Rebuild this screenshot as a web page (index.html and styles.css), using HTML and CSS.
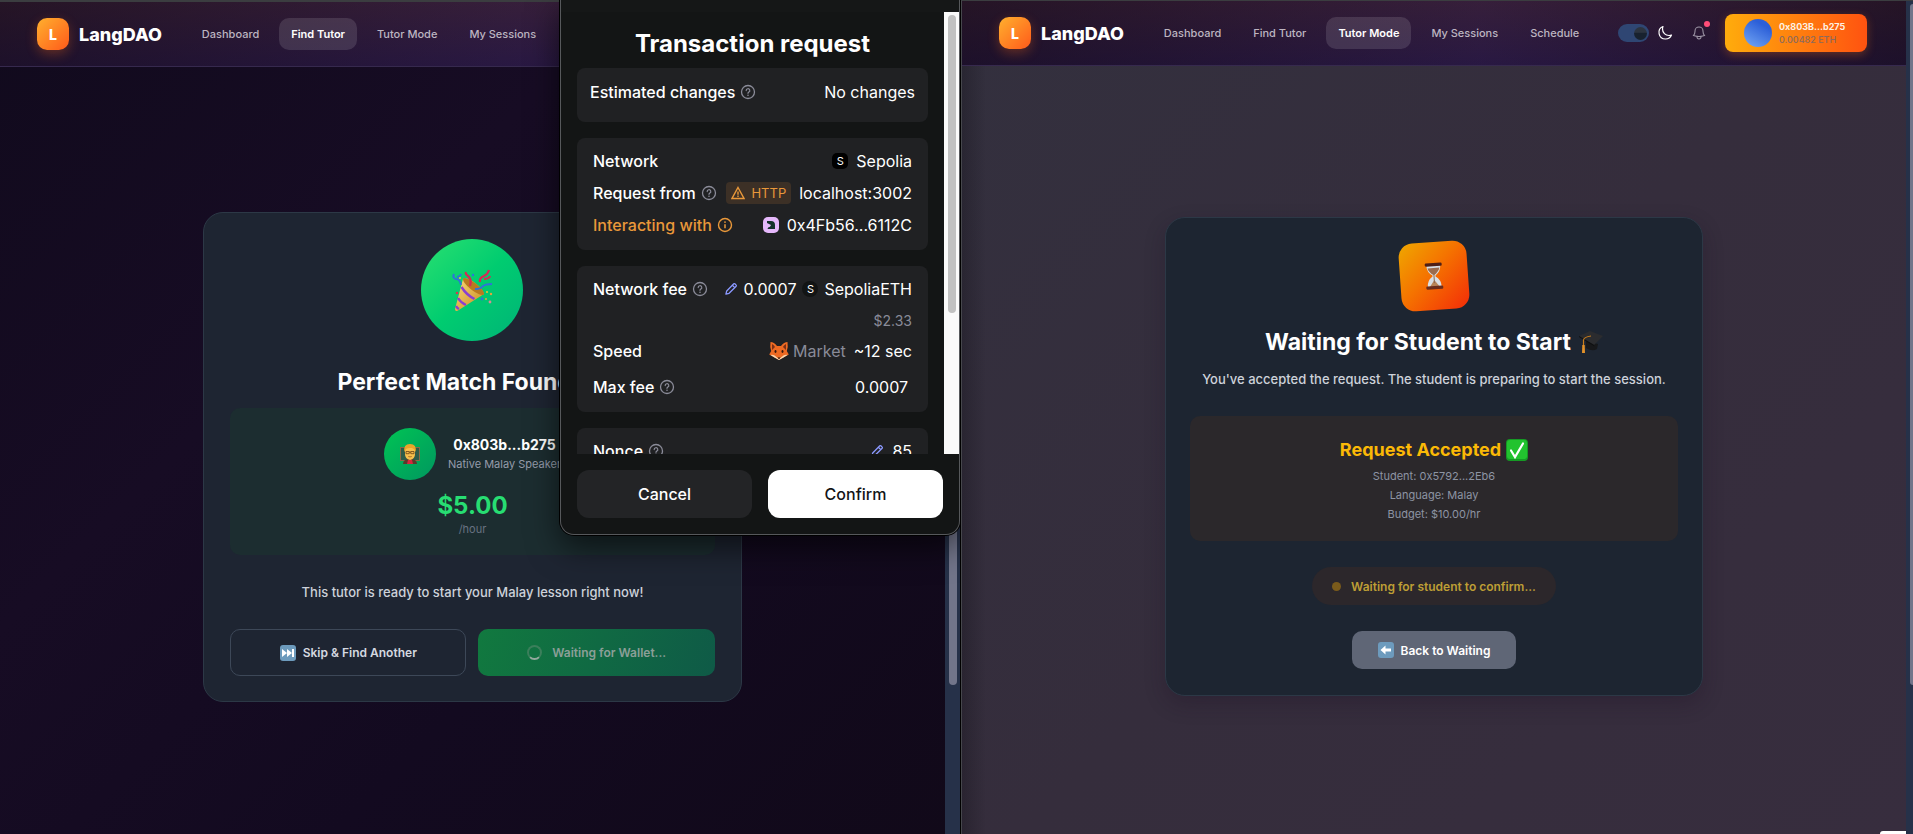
FILE: index.html
```html
<!DOCTYPE html>
<html lang="en">
<head>
    <meta charset="UTF-8">
    <meta name="viewport" content="width=device-width, initial-scale=1.0">
    <title>LangDAO</title>
    <link rel="stylesheet" href="styles.css">
</head>
<body>
    <!-- shared icons -->
    <svg class="defs" width="0" height="0" aria-hidden="true">
        <defs>
            <linearGradient id="cone" x1="0" y1="0" x2="1" y2="1">
                <stop offset="0" stop-color="#f9d978"/>
                <stop offset="1" stop-color="#c98a1e"/>
            </linearGradient>
        </defs>
        <symbol id="help" viewBox="0 0 16 16">
            <circle cx="8" cy="8" r="6.500" fill="none" stroke="currentColor" stroke-width="1.3"/>
            <path d="M6.200 6.600a1.800 1.800 0 1 1 2.700 1.500c-.6.4-.9.6-.9 1.200" fill="none" stroke="currentColor" stroke-width="1.2" stroke-linecap="round"/>
            <circle cx="8" cy="11.2" r=".8" fill="currentColor"/>
        </symbol>
        <symbol id="info" viewBox="0 0 16 16">
            <circle cx="8" cy="8" r="6.500" fill="none" stroke="currentColor" stroke-width="1.4"/>
            <path d="M8 7.200v4" stroke="currentColor" stroke-width="1.5"/>
            <circle cx="8" cy="5.1" r=".9" fill="currentColor"/>
        </symbol>
        <symbol id="pencil" viewBox="0 0 16 16">
            <path d="M2.200 13.800l.9-3.600 8.100-8.100q.6-.5 1.200 0l1.500 1.500q.5.6 0 1.200l-8.100 8.100zM9.600 3.800l2.600 2.600" fill="none" stroke="currentColor" stroke-width="1.5" stroke-linejoin="round"/>
        </symbol>
        <symbol id="popper" viewBox="0 0 42 42">
            <path d="M4 40q0 3 3 1.400L33 25Q32 20 24 14 17 8 12 10z" fill="url(#cone)"/>
            <ellipse cx="22.500" cy="17.500" rx="13" ry="3.800" transform="rotate(38 22.500 17.500)" fill="#b97920"/>
            <path d="M10.500 18q5 8 13 12M7 29q3 5 8 7M5 37q1 2 3 3" fill="none" stroke="#8a3fd1" stroke-width="2.400"/>
            <path d="M19 17q2-7-2-10-3-2-2-4M29 13q-1-4 4-6 4-2 5-6M33 10q5 0 6-3" fill="none" stroke="#d42a55" stroke-width="2.200"/>
            <path d="M24 20q6 0 8-3 3-2 9-2M10 16q-1-6-5-6-4-1-2-5M6 8q3 0 4-3" fill="none" stroke="#2f73d8" stroke-width="2"/>
            <circle cx="22" cy="6" r="1.200" fill="#2f73d8"/>
            <circle cx="9" cy="9" r="1.100" fill="#e6c23a"/>
            <circle cx="6" cy="24" r="1.300" fill="#d33a50"/>
            <circle cx="31" cy="30" r="1.400" fill="#2f73d8"/>
            <circle cx="40" cy="25" r="1.200" fill="#e2a43c"/>
            <circle cx="36" cy="23" r="1.100" fill="#dfc43a"/>
            <circle cx="39" cy="33" r="1.400" fill="#d88b95"/>
            <circle cx="35" cy="30" r="1" fill="#e2a43c"/>
        </symbol>
    </svg>

    <div class="desktop">
        <section class="window window-student">
            <header class="navbar">
                <a class="brand" href="#"><span class="brand-mark">L</span>LangDAO</a>
                <nav class="nav-links">
                    <a href="#">Dashboard</a>
                    <a href="#" class="active">Find Tutor</a>
                    <a href="#">Tutor Mode</a>
                    <a href="#">My Sessions</a>
                </nav>
            </header>
            <main class="stage">
                <div class="card match-card">
                    <div class="party">
                        <svg width="42" height="42" role="img" aria-label="Party popper"><use href="#popper"/></svg>
                    </div>
                    <h1>Perfect Match Found! <svg width="20" height="20" aria-hidden="true"><use href="#popper"/></svg></h1>
                    <div class="match-box">
                        <div class="tutor">
                            <div class="avatar">
                                <svg width="20" height="22" viewBox="0 0 20 22" role="img" aria-label="Teacher">
                                    <path d="M0 4h20v14H0z" fill="#8a6a45"/>
                                    <path d="M1 5h18v12H1z" fill="#2d5c4a"/>
                                    <path d="M3 21q0-5 7-5t7 5z" fill="#5b3a2c"/>
                                    <path d="M8 17h4l1 4H7z" fill="#d8283c"/>
                                    <path d="M5 6q0-4 5-4t5 4v5q0 5-5 6-5-1-5-6z" fill="#f7c04c"/>
                                    <path d="M4.500 9Q3 1 10 1t5.500 8Q15 6 12 5 8 4.500 6 6z" fill="#e9a52a"/>
                                    <path d="M6 8.500h3.200v2.200H6zm4.800 0H14v2.200h-3.200zM9.200 9.200h1.600" fill="none" stroke="#6b4418" stroke-width=".8"/>
                                    <path d="M8.300 13.500q1.700.8 3.400 0" fill="none" stroke="#9a5a20" stroke-width=".8"/>
                                </svg>
                            </div>
                            <div class="tutor-info">
                                <strong>0x803b...b275</strong>
                                <span>Native Malay Speaker</span>
                            </div>
                        </div>
                        <div class="price">$5.00</div>
                        <div class="per">/hour</div>
                    </div>
                    <p class="ready">This tutor is ready to start your Malay lesson right now!</p>
                    <div class="match-actions">
                        <button class="btn btn-outline" type="button">
                            <svg width="16" height="16" viewBox="0 0 16 16" aria-hidden="true">
                                <rect width="16" height="16" rx="3" fill="#6d9bbd"/>
                                <path d="M2 4l5 4-5 4zM7 4l5 4-5 4zM12 4h2v8h-2z" fill="#fff"/>
                            </svg>
                            Skip &amp; Find Another
                        </button>
                        <button class="btn btn-wallet" type="button" disabled>
                            <span class="spinner"></span>
                            Waiting for Wallet...
                        </button>
                    </div>
                </div>
            </main>
            <div class="page-scroll"><div class="page-thumb"></div></div>

            <aside class="wallet" aria-label="Wallet">
                <div class="wallet-top"></div>
                <div class="wallet-view">
                    <div class="wallet-body">
                        <h2>Transaction request</h2>
                        <div class="panel panel-changes">
                            <div class="row">
                                <span class="label">Estimated changes <svg class="hint"><use href="#help"/></svg></span>
                                <span class="value">No changes</span>
                            </div>
                        </div>
                        <div class="panel">
                            <div class="row">
                                <span class="label">Network</span>
                                <span class="value"><i class="token">S</i>Sepolia</span>
                            </div>
                            <div class="row">
                                <span class="label">Request from <svg class="hint"><use href="#help"/></svg></span>
                                <span class="value">
                                    <span class="http">
                                        <svg width="14" height="14" viewBox="0 0 14 14" aria-hidden="true">
                                            <path d="M7 1.500L13 12.500H1z" fill="none" stroke="currentColor" stroke-width="1.400"/>
                                            <path d="M7 5.500v3.200M7 9.600v1.400" stroke="currentColor" stroke-width="1.400"/>
                                        </svg>
                                        HTTP
                                    </span>
                                    localhost:3002
                                </span>
                            </div>
                            <div class="row">
                                <span class="label warn">Interacting with <svg class="hint"><use href="#info"/></svg></span>
                                <span class="value">
                                    <svg width="16" height="16" viewBox="0 0 16 16" aria-hidden="true">
                                        <rect width="16" height="16" rx="5" fill="#e5b8fb"/>
                                        <path d="M4 4h4q4 0 4 4v4H4.500q0-2 2.500-2.300L8 8 4 6z" fill="#14312b"/>
                                    </svg>
                                    0x4Fb56...6112C
                                </span>
                            </div>
                        </div>
                        <div class="panel panel-fee">
                            <div class="row">
                                <span class="label">Network fee <svg class="hint"><use href="#help"/></svg></span>
                                <span class="value fee"><svg class="edit"><use href="#pencil"/></svg>0.0007 <i class="token round">S</i>SepoliaETH</span>
                            </div>
                            <div class="row fiat"><span class="value">$2.33</span></div>
                            <div class="row">
                                <span class="label">Speed</span>
                                <span class="value">
                                    <span class="market">
                                        <svg width="20" height="20" viewBox="0 0 20 20" role="img" aria-label="Fox">
                                            <path d="M1.500 1Q5 1 8 5h4q3-4 6.500-4 .8 5-.7 9l2 3.500-5.300 3L10 19l-4.500-2.500-5.300-3 2-3.500Q.7 6 1.500 1z" fill="#ee6a22"/>
                                            <path d="M3 3q2 1 3 3l-3 3zM17 3q-2 1-3 3l3 3z" fill="#7b2f16"/>
                                            <path d="M1.500 14q3.500-.6 5.300 1.600L10 18l3.200-2.400q1.800-2.200 5.300-1.600l-4 2.500L10 19l-4.500-2.500z" fill="#f6d9b3"/>
                                            <ellipse cx="6.500" cy="10.500" rx="1" ry="1.400" fill="#35180e"/>
                                            <ellipse cx="13.500" cy="10.500" rx="1" ry="1.400" fill="#35180e"/>
                                            <path d="M8.500 16.500h3L10 18.200z" fill="#1d1210"/>
                                        </svg>
                                        Market
                                    </span>
                                    ~12 sec
                                </span>
                            </div>
                            <div class="row max">
                                <span class="label">Max fee <svg class="hint"><use href="#help"/></svg></span>
                                <span class="value">0.0007</span>
                            </div>
                        </div>
                        <div class="panel">
                            <div class="row">
                                <span class="label">Nonce <svg class="hint"><use href="#help"/></svg></span>
                                <span class="value"><svg class="edit"><use href="#pencil"/></svg>85</span>
                            </div>
                        </div>
                    </div>
                    <div class="wallet-scroll"><div class="wallet-thumb"></div></div>
                </div>
                <footer class="wallet-actions">
                    <button class="cancel" type="button">Cancel</button>
                    <button class="confirm" type="button">Confirm</button>
                </footer>
            </aside>
        </section>

        <section class="window window-tutor">
            <header class="navbar">
                <a class="brand" href="#"><span class="brand-mark">L</span>LangDAO</a>
                <nav class="nav-links">
                    <a href="#">Dashboard</a>
                    <a href="#">Find Tutor</a>
                    <a href="#" class="active">Tutor Mode</a>
                    <a href="#">My Sessions</a>
                    <a href="#">Schedule</a>
                </nav>
                <div class="nav-tools">
                    <label class="theme">
                        <input type="checkbox" class="toggle" aria-label="Dark theme" checked>
                        <svg width="16" height="16" viewBox="0 0 24 24" aria-hidden="true">
                            <path d="M21.750 15A9.750 9.750 0 0 1 18 15.750 9.750 9.750 0 0 1 8.250 6c0-1.330.27-2.600.75-3.750A9.750 9.750 0 0 0 12.750 21a9.750 9.750 0 0 0 9-6z" fill="none" stroke="#fff" stroke-width="1.800" stroke-linejoin="round"/>
                        </svg>
                    </label>
                    <button class="bell" type="button" aria-label="Notifications">
                        <svg width="16" height="16" viewBox="0 0 24 24" aria-hidden="true">
                            <path d="M14.860 17.080a23.850 23.850 0 0 0 5.450-1.310A8.970 8.970 0 0 1 18 9.750V9A6 6 0 0 0 6 9v.75a8.970 8.970 0 0 1-2.310 6.020c1.730.64 3.560 1.090 5.450 1.310m5.720 0a24.250 24.250 0 0 1-5.720 0m5.720 0a3 3 0 1 1-5.720 0" fill="none" stroke="currentColor" stroke-width="1.600"/>
                        </svg>
                        <span class="bell-dot"></span>
                    </button>
                    <button class="account" type="button">
                        <span class="account-pic"></span>
                        <span class="account-text"><b>0x803B...b275</b><small>0.00482 ETH</small></span>
                    </button>
                </div>
            </header>
            <main class="stage">
                <div class="card wait-card">
                    <div class="hourglass">
                        <svg width="20" height="28" viewBox="0 0 20 28" role="img" aria-label="Hourglass">
                            <path d="M3 3h14q0 7-5.500 10.500v1Q17 18 17 25H3q0-7 5.500-10.500v-1Q3 10 3 3z" fill="#d9dfe4"/>
                            <path d="M4 6h12q-1 4-5.500 7h-1Q5 10 4 6z" fill="#9c6b4c"/>
                            <path d="M10 18l5 7H5z" fill="#b98558"/>
                            <path d="M9.500 13h1v8h-1z" fill="#8d6a50"/>
                            <rect x="1.500" y="1" width="17" height="3.200" rx="1.200" fill="#4e1f16"/>
                            <rect x="1.500" y="24" width="17" height="3.200" rx="1.200" fill="#6b2d1c"/>
                        </svg>
                    </div>
                    <h1>
                        Waiting for Student to Start
                        <svg width="24" height="24" viewBox="0 0 24 24" role="img" aria-label="Graduation cap">
                            <path d="M7 11l12 3-1 5q-5 3-11-1z" fill="#17181a"/>
                            <path d="M0 6l11-5 13 5-9 9z" fill="#2b2c2f"/>
                            <path d="M0 6l15 9 .3 1.200L0 7z" fill="#0e0f10"/>
                            <path d="M12 6Q5 7 4.500 10v7" fill="none" stroke="#c97d1c" stroke-width="1.200"/>
                            <path d="M3.300 15h2.400l.3 8H3z" fill="#e2912a"/>
                        </svg>
                    </h1>
                    <p class="lead">You've accepted the request. The student is preparing to start the session.</p>
                    <div class="request-box">
                        <h3>
                            Request Accepted
                            <svg width="22" height="22" viewBox="0 0 22 22" role="img" aria-label="Accepted">
                                <rect width="22" height="22" rx="4" fill="#159a24"/>
                                <rect x="1" y="1" width="20" height="19" rx="3" fill="#22c32f"/>
                                <path d="M5 11.500l4 6.500 8-13.500" fill="none" stroke="#fff" stroke-width="2.200" stroke-linecap="round"/>
                            </svg>
                        </h3>
                        <p>Student: 0x5792...2Eb6</p>
                        <p>Language: Malay</p>
                        <p>Budget: $10.00/hr</p>
                    </div>
                    <div class="status"><span class="status-dot"></span>Waiting for student to confirm...</div>
                    <button class="btn btn-back" type="button">
                        <svg width="16" height="16" viewBox="0 0 16 16" aria-hidden="true">
                            <rect width="16" height="16" rx="3" fill="#6d9bbd"/>
                            <path d="M2.500 8l5-4.500V6.500H13v3H7.500v3z" fill="#fff"/>
                        </svg>
                        Back to Waiting
                    </button>
                </div>
            </main>
            <div class="page-scroll"><div class="page-thumb"></div></div>
            <div class="corner-widget"></div>
        </section>
    </div>
</body>
</html>
```
FILE: styles.css
```css
* {
    box-sizing: border-box;
}
body {
    margin: 0;
    background: #000;
    font-family: Inter, "Liberation Sans", sans-serif;
    color: #fff;
}
button {
    font-family: inherit;
    border: none;
    cursor: pointer;
}
a {
    color: inherit;
    text-decoration: none;
}
h1, h2, h3, p {
    margin: 0;
}
svg {
    flex: none;
}
.defs {
    position: absolute;
}
.desktop {
    display: grid;
    grid-template-columns: 961fr 952fr;
    height: 100vh;
    overflow: hidden;
}

/* browser windows */
.window {
    position: relative;
    display: grid;
    grid-template-columns: 1fr 15px;
    grid-template-rows: auto 1fr;
    min-height: 0;
    border-top: 2px solid #3b3d40;
}
.window-student {
    border-right: 1px solid #000;
    background: linear-gradient(135deg, #110a1d 0%, #170c24 35%, #130a20 65%, #110919 100%);
}
.window-tutor {
    grid-template-columns: 1fr 7px;
    border-top-width: 1px;
    border-left: 1px solid #46474c;
    background:
        linear-gradient(90deg, rgba(20, 18, 26, 0.35), rgba(20, 18, 26, 0) 24px),
        linear-gradient(135deg, #33303e, #352d3c 50%, #372d3e);
}
.navbar {
    grid-column: 1;
    display: flex;
    align-items: center;
    height: 65px;
    padding: 0 37px;
    border-bottom: 1px solid #36294e;
    background:
        linear-gradient(90deg, rgba(22, 10, 22, 0.5), rgba(60, 30, 80, 0.2) 55%, rgba(22, 10, 22, 0.5)),
        linear-gradient(180deg, #351f35, #24173f);
}
.window-tutor .navbar {
    padding-right: 39px;
}
.brand {
    display: flex;
    align-items: center;
    gap: 10px;
    font-size: 18px;
    font-weight: 800;
}
.brand-mark {
    display: grid;
    place-items: center;
    width: 32px;
    height: 32px;
    border-radius: 10px;
    background: linear-gradient(135deg, #ffb02e, #ff5a1a);
    box-shadow: 0 4px 12px rgba(255, 110, 20, 0.3);
    font-size: 14px;
}
.nav-links {
    display: flex;
    gap: 8px;
    margin-left: 28px;
    font-size: 11px;
    font-weight: 500;
    color: #bdb5c1;
}
.nav-links a {
    padding: 0 12px;
    border-radius: 10px;
    line-height: 32px;
    white-space: nowrap;
}
.nav-links .active {
    background: rgba(255, 255, 255, 0.12);
    color: #fff;
    font-weight: 600;
}
.nav-tools {
    display: flex;
    align-items: center;
    gap: 18px;
    margin-left: auto;
}
.theme {
    display: flex;
    align-items: center;
    gap: 8px;
}
.toggle {
    appearance: none;
    display: flex;
    justify-content: flex-end;
    align-items: center;
    width: 31px;
    height: 18px;
    margin: 0;
    padding: 2px;
    border-radius: 9px;
    background: #2f4673;
}
.toggle::before {
    content: "";
    width: 13px;
    height: 13px;
    border-radius: 50%;
    background: linear-gradient(#2c3440 40%, #18222f 50%);
}
.bell {
    position: relative;
    display: flex;
    padding: 0;
    background: none;
    color: #9e96a6;
}
.bell-dot {
    position: absolute;
    top: -4px;
    right: -3px;
    width: 6px;
    height: 6px;
    border-radius: 50%;
    background: #ff4d78;
}
.account {
    display: flex;
    align-items: center;
    gap: 7px;
    width: 142px;
    height: 38px;
    padding: 0 19px;
    border-radius: 8px;
    background: linear-gradient(90deg, #ffac0c, #ff5310);
    box-shadow: 0 3px 10px rgba(255, 120, 20, 0.3);
    text-align: left;
}
.account-pic {
    flex: none;
    width: 28px;
    height: 28px;
    border-radius: 50%;
    background: linear-gradient(30deg, #76a9f5, #2c5fd8 75%);
}
.account-text b,
.account-text small {
    display: block;
    font-size: 9px;
    line-height: 13px;
    white-space: nowrap;
}
.account-text b {
    color: #fdf1e4;
    font-weight: 700;
}
.account-text small {
    color: #8a6a5e;
    font-weight: 500;
}
.stage {
    grid-column: 1;
    display: flex;
    flex-direction: column;
    align-items: center;
    min-height: 0;
}
.page-scroll {
    grid-column: 2;
    grid-row: 1 / 3;
    padding: 3px 3px 0 4px;
    background: #263149;
}
.page-thumb {
    height: 82%;
    border-radius: 4px;
    background: #72758a;
}
.window-tutor .page-scroll {
    padding: 3px 0 0 4px;
}
.window-tutor .page-thumb {
    border-radius: 4px 0 0 4px;
}
.corner-widget {
    position: absolute;
    right: 7px;
    bottom: 0;
    width: 26px;
    height: 3px;
    border-radius: 8px 0 0 0;
    background: #fff;
}

/* cards */
.card {
    display: flex;
    flex-direction: column;
    align-items: center;
    border: 1px solid #2c3846;
    border-radius: 20px;
    background: #1e2532;
    text-align: center;
}
.card h1 {
    display: flex;
    align-items: center;
    gap: 8px;
    font-size: 23px;
    line-height: 32px;
    font-weight: 700;
}
.match-card {
    width: 57%;
    margin-top: 145px;
    padding: 26px 26px 25px;
}
.party {
    display: grid;
    place-items: center;
    width: 102px;
    height: 102px;
    margin-bottom: 25px;
    border-radius: 50%;
    background: linear-gradient(135deg, #2be070, #00cc70 50%, #00b377);
}
.match-box {
    align-self: stretch;
    margin-top: 10px;
    padding: 20px;
    height: 147px;
    border-radius: 10px;
    background: #1c2d30;
}
.tutor {
    display: flex;
    align-items: center;
    justify-content: center;
    gap: 12px;
}
.avatar {
    display: grid;
    place-items: center;
    width: 52px;
    height: 52px;
    border-radius: 50%;
    background: linear-gradient(135deg, #00c454, #00975f);
}
.tutor-info strong {
    display: block;
    font-size: 14px;
    line-height: 20px;
}
.tutor-info span {
    display: block;
    font-size: 11px;
    line-height: 18px;
    color: #949baa;
}
.price {
    margin-top: 12px;
    color: #27dd72;
    font-size: 24px;
    line-height: 28px;
    font-weight: 700;
}
.per {
    color: #687281;
    font-size: 11px;
    line-height: 18px;
}
.ready {
    margin: 26px 0;
}
.ready,
.lead {
    font-size: 13px;
    font-weight: 500;
    line-height: 22px;
    color: #cdd2da;
}
.match-actions {
    display: grid;
    grid-template-columns: 1fr 1fr;
    gap: 12px;
    align-self: stretch;
}
.btn {
    display: flex;
    align-items: center;
    justify-content: center;
    gap: 7px;
    border-radius: 10px;
    font-size: 12px;
    font-weight: 600;
    color: #d5d9e0;
}
.btn-outline {
    height: 47px;
    border: 1px solid #3d4858;
    background: transparent;
}
.btn-wallet {
    gap: 10px;
    height: 47px;
    background: linear-gradient(110deg, #11793f, #0f5a47);
    color: #8b9f98;
}
.spinner {
    width: 15px;
    height: 15px;
    border: 2px solid #3b7f5b;
    border-bottom-color: #93a99e;
    border-radius: 50%;
}
.wait-card {
    width: 57%;
    margin-top: 151px;
    padding: 24px 24px 26px;
    box-shadow: 0 8px 20px rgba(30, 15, 35, 0.3);
    background: #1d2531;
}
.hourglass {
    display: grid;
    place-items: center;
    width: 68px;
    height: 68px;
    margin-bottom: 16px;
    border-radius: 14px;
    background: linear-gradient(135deg, #efa800, #f57300 45%, #f32c08);
    transform: rotate(-4deg);
}
.lead {
    margin: 10px 0 26px;
}
.request-box {
    align-self: stretch;
    height: 125px;
    padding: 20px;
    border-radius: 10px;
    background: #2b282b;
}
.request-box h3 {
    display: flex;
    align-items: center;
    justify-content: center;
    gap: 5px;
    margin-bottom: 3px;
    color: #fbb906;
    font-size: 18px;
    line-height: 28px;
    font-weight: 700;
}
.request-box p {
    color: #8d94a3;
    font-size: 11px;
    line-height: 19px;
}
.status {
    display: flex;
    align-items: center;
    gap: 10px;
    height: 38px;
    margin: 26px 0;
    padding: 0 20px;
    border-radius: 19px;
    background: #2c272b;
    color: #bd9e35;
    font-size: 12px;
    font-weight: 600;
}
.status-dot {
    width: 9px;
    height: 9px;
    border-radius: 50%;
    background: #7b5b1b;
}
.btn-back {
    height: 38px;
    padding: 0 26px;
    background: #5f6676;
    color: #fff;
}

/* wallet popup, lies over the student window */
.wallet {
    position: absolute;
    top: -2px;
    right: 0;
    width: 400px;
    border: 1px solid #56585b;
    border-top: none;
    border-radius: 0 0 14px 14px;
    background: #131515;
    box-shadow: 0 0 0 1px #000, 0 12px 32px rgba(0, 0, 0, 0.6);
    overflow: hidden;
    font-size: 16px;
}
.wallet-top {
    height: 12px;
    background: #151717;
}
.wallet-view {
    display: grid;
    grid-template-columns: 1fr 15px;
    height: 442px;
    overflow: hidden;
}
.wallet-body {
    display: flex;
    flex-direction: column;
    gap: 16px;
    padding: 16px;
    min-width: 0;
}
.wallet-body h2 {
    margin-bottom: -8px;
    font-size: 24px;
    line-height: 32px;
    text-align: center;
    color: #fff;
}
.panel {
    padding: 7px 16px 9px;
    border-radius: 8px;
    background: #202123;
}
.panel-changes {
    padding: 8px 13px 14px;
}
.panel-fee {
    padding-bottom: 5px;
}
.row {
    display: flex;
    align-items: center;
    justify-content: space-between;
    height: 32px;
    white-space: nowrap;
}
.label,
.value,
.market {
    display: flex;
    align-items: center;
}
.label {
    gap: 5px;
    font-weight: 500;
}
.value {
    gap: 8px;
    margin-left: auto;
}
.fee {
    gap: 6px;
}
.warn {
    color: #e9983a;
}
.hint {
    width: 16px;
    height: 16px;
    color: #8b8c99;
}
.warn .hint {
    color: inherit;
}
.edit {
    width: 14px;
    height: 14px;
    color: #8b99ff;
}
.token {
    display: grid;
    place-items: center;
    width: 16px;
    height: 16px;
    border-radius: 5px;
    background: #000;
    font-size: 11px;
    font-style: normal;
}
.round {
    border-radius: 50%;
    background: #121414;
}
.http {
    display: flex;
    align-items: center;
    gap: 6px;
    height: 22px;
    padding: 0 5px;
    border-radius: 4px;
    background: #3c3026;
    color: #e9983a;
    font-size: 13px;
}
.fiat {
    height: 30px;
    color: #898b98;
    font-size: 14px;
}
.market {
    gap: 4px;
    color: #898b98;
}
.max {
    height: 40px;
    padding-right: 4px;
}
.wallet-scroll {
    padding: 3px 3px 0 4px;
    background: #fafafa;
}
.wallet-thumb {
    height: 298px;
    border-radius: 4px;
    background: #c1c1c1;
}
.wallet-actions {
    display: grid;
    grid-template-columns: 1fr 1fr;
    gap: 16px;
    padding: 16px;
}
.wallet-actions button {
    height: 48px;
    border-radius: 12px;
    font-size: 16px;
    font-weight: 500;
}
.cancel {
    background: #232426;
    color: #fff;
}
.confirm {
    background: #fff;
    color: #131416;
}
```
